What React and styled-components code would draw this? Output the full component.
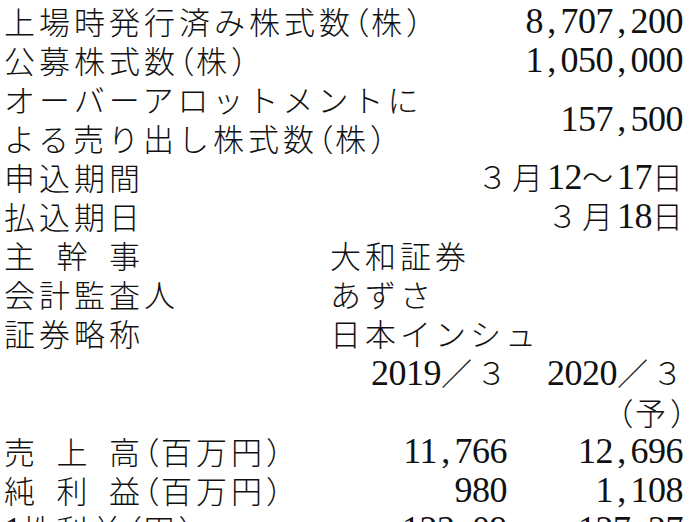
import React from "react";
import styled, { createGlobalStyle } from "styled-components";

const Global = createGlobalStyle`
  html, body { margin: 0; padding: 0; background: #fff; }
  body { width: 696px; height: 522px; overflow: hidden; }
`;

const Page = styled.div`
  box-sizing: border-box;
  width: 696px;
  height: 522px;
  overflow: hidden;
  padding: 1px 13px 0 4px;
  font-family: "Noto Sans CJK JP", sans-serif;
  font-size: 31px;
  font-weight: 300;
  letter-spacing: 4px;
  line-height: 39px;
  color: #111;
  white-space: nowrap;
`;

const InfoGrid = styled.div`
  display: grid;
  grid-template-columns: 1fr auto;
  grid-auto-rows: 39px;
`;

const Label = styled.div`
  grid-column: 1;
  grid-row: span ${(p) => p.$lines || 1};
  line-height: 39px;
`;

const Value = styled.div`
  grid-column: ${(p) => p.$col || 2};
  grid-row: span ${(p) => p.$lines || 1};
  align-self: center;
  text-align: right;
  margin-right: ${(p) => (p.$cjkEnd ? "-4px" : "0")};
`;

const NameGrid = styled.div`
  display: grid;
  grid-template-columns: 326px 1fr;
  grid-auto-rows: 39px;
`;

const FinGrid = styled.div`
  display: grid;
  grid-template-columns: 1fr 176px 176px;
  grid-auto-rows: 39px;
  margin-top: 1px;
`;

const Spread = styled.span`
  display: inline-flex;
  justify-content: space-between;
  width: 140px;
  vertical-align: top;
`;

const Paren = styled.span`
  font-feature-settings: "halt";
  letter-spacing: 1.5px;
`;

const NumText = styled.span`
  font-family: "Liberation Serif", serif;
  font-size: 36px;
  font-weight: 400;
  letter-spacing: -0.5px;
`;

const Sep = styled.span`
  display: inline-block;
  width: 17.5px;
  text-align: center;
  letter-spacing: 0;
`;

function Num({ v }) {
  const parts = [];
  v.split("").forEach((ch, i) => {
    if (ch === "," || ch === ".") parts.push(<Sep key={i}>{ch}</Sep>);
    else parts.push(ch);
  });
  return <NumText>{parts}</NumText>;
}

function P({ children }) {
  return (
    <>
      <Paren>（</Paren>
      {children}
      <Paren>）</Paren>
    </>
  );
}

function Spaced({ text }) {
  return (
    <Spread>
      {text.split("").map((c, i) => (
        <span key={i}>{c}</span>
      ))}
    </Spread>
  );
}

export default function App() {
  return (
    <>
      <Global />
      <Page>
        <InfoGrid>
          <Label>
            上場時発行済み株式数<P>株</P>
          </Label>
          <Value>
            <Num v="8,707,200" />
          </Value>
          <Label>
            公募株式数<P>株</P>
          </Label>
          <Value>
            <Num v="1,050,000" />
          </Value>
          <Label $lines={2}>
            オーバーアロットメントに
            <br />
            よる売り出し株式数<P>株</P>
          </Label>
          <Value $lines={2}>
            <Num v="157,500" />
          </Value>
          <Label>申込期間</Label>
          <Value $cjkEnd>
            ３月<Num v="12" />〜<Num v="17" />日
          </Value>
          <Label>払込期日</Label>
          <Value $cjkEnd>
            ３月<Num v="18" />日
          </Value>
        </InfoGrid>
        <NameGrid>
          <Label>
            <Spaced text="主幹事" />
          </Label>
          <div>大和証券</div>
          <Label>会計監査人</Label>
          <div>あずさ</div>
          <Label>証券略称</Label>
          <div>日本インシュ</div>
        </NameGrid>
        <FinGrid>
          <Value $col={2} $cjkEnd>
            <Num v="2019" />／３
          </Value>
          <Value $col={3} $cjkEnd>
            <Num v="2020" />／３
          </Value>
          <Value $col={3} $cjkEnd>
            <P>予</P>
          </Value>
          <Label>
            <Spaced text="売上高" />
            <P>百万円</P>
          </Label>
          <Value $col={2}>
            <Num v="11,766" />
          </Value>
          <Value $col={3}>
            <Num v="12,696" />
          </Value>
          <Label>
            <Spaced text="純利益" />
            <P>百万円</P>
          </Label>
          <Value $col={2}>
            <Num v="980" />
          </Value>
          <Value $col={3}>
            <Num v="1,108" />
          </Value>
          <Label>
            <Num v="1" />株利益<P>円</P>
          </Label>
          <Value $col={2}>
            <Num v="123.09" />
          </Value>
          <Value $col={3}>
            <Num v="127.27" />
          </Value>
        </FinGrid>
      </Page>
    </>
  );
}
